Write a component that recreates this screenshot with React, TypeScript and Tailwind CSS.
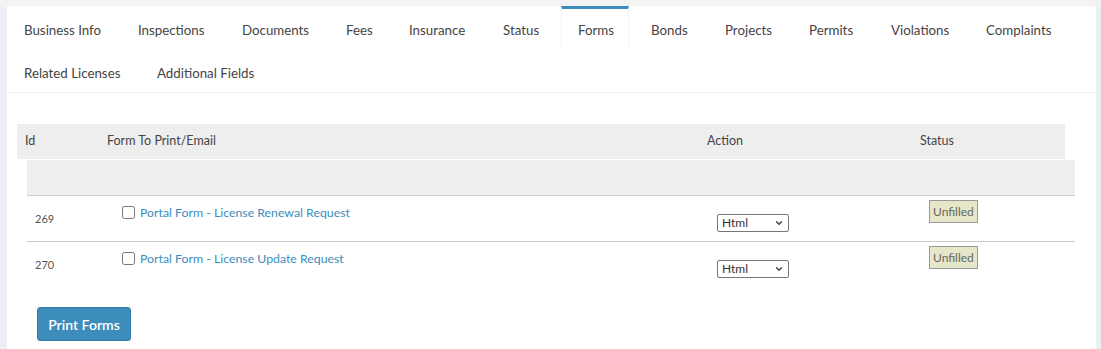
import { ChevronDown } from 'lucide-react'

const tabs = [
  { label: 'Business Info', w: 'w-[108px]' },
  { label: 'Inspections', w: 'w-[98px]' },
  { label: 'Documents', w: 'w-[98px]' },
  { label: 'Fees', w: 'w-[57px]' },
  { label: 'Insurance', w: 'w-[88px]' },
  { label: 'Status', w: 'w-[68px]' },
  { label: 'Forms', w: 'w-[68px]', active: true },
  { label: 'Bonds', w: 'w-[68px]' },
  { label: 'Projects', w: 'w-[78px]' },
  { label: 'Permits', w: 'w-[76px]' },
  { label: 'Violations', w: 'w-[89px]' },
  { label: 'Complaints', w: 'w-[99px]' },
  { label: 'Related Licenses', w: 'w-[127px]' },
  { label: 'Additional Fields', w: 'w-[130px]' },
]

const rows = [
  { id: '269', name: 'Portal Form - License Renewal Request' },
  { id: '270', name: 'Portal Form - License Update Request' },
]

function FormatSelect() {
  return (
    <div className="relative flex h-[18px] w-[72px] items-center">
      <select className="block h-[18px] w-full appearance-none rounded-[2px] border border-[#767676] bg-white pl-[4px] text-[12px] leading-none text-[#333]">
        <option>Html</option>
        <option>Pdf</option>
      </select>
      <ChevronDown className="pointer-events-none absolute right-[5px] top-[4px] h-[10px] w-[10px] text-[#444]" strokeWidth={3.5} />
    </div>
  )
}

export default function App() {
  return (
    <div className="min-h-[349px] bg-[#ecf0f5] font-['Lato',sans-serif]">
      <div className="h-[6px] bg-[#f3f3f3]" />
      <div className="ml-[7px] mr-[5px] rounded-tr-[3px] bg-white pb-[20px]">
        <div className="flex flex-wrap border-b border-[#f0f0f0] pl-[1px]">
          {tabs.map((t) => (
            <div
              key={t.label}
              className={`mr-[6px] flex h-[43px] items-center border-t-[3px] pl-4 pt-[4px] text-[13.3px] text-[#444] ${t.w} ${
                t.active ? 'border-x border-t-[#3c8dbc] border-x-[#f4f4f4]' : 'border-t-transparent'
              }`}
            >
              {t.label}
            </div>
          ))}
        </div>

        <div className="pt-[31px]">
          <div className="ml-[10px] mr-[31px] grid h-[35px] grid-cols-[82px_600px_213px_1fr] items-center bg-[#eeeeee] text-[12.5px] text-[#444]">
            <div className="pl-2">Id</div>
            <div className="pl-2">Form To Print/Email</div>
            <div className="pl-2">Action</div>
            <div className="pl-2">Status</div>
          </div>

          <div className="ml-[20px] mr-[21px] mt-[1px]">
            <div className="h-[36px] border-b border-[#cccccc] bg-[#eeeeee]" />
            {rows.map((r, i) => (
              <div
                key={r.id}
                className={`grid h-[46px] grid-cols-[82px_600px_213px_1fr] ${i === 0 ? 'border-b border-[#cccccc]' : ''}`}
              >
                <div className="pl-2 pt-[15px] text-[11px] text-[#555]">{r.id}</div>
                <div className="flex items-start gap-[5px] pl-[13px] pt-[9px]">
                  <input type="checkbox" className="mt-[1px] h-[13px] w-[13px]" />
                  <a href="#" className="text-[12.3px] leading-[15px] text-[#3c8dbc]">
                    {r.name}
                  </a>
                </div>
                <div className="pl-2 pt-[18px]">
                  <FormatSelect />
                </div>
                <div className="pl-[7px] pt-[4px]">
                  <span className="block w-fit border border-[#999] bg-[#e6e6c8] px-[3px] py-[2px] text-[12px] leading-[17px] text-[#666]">
                    Unfilled
                  </span>
                </div>
              </div>
            ))}
          </div>

          <button className="ml-[30px] mt-[19px] h-[34px] w-[94px] rounded-[3px] border border-[#367fa9] bg-[#3c8dbc] text-[14px] font-semibold text-white">
            Print Forms
          </button>
        </div>
      </div>
    </div>
  )
}
